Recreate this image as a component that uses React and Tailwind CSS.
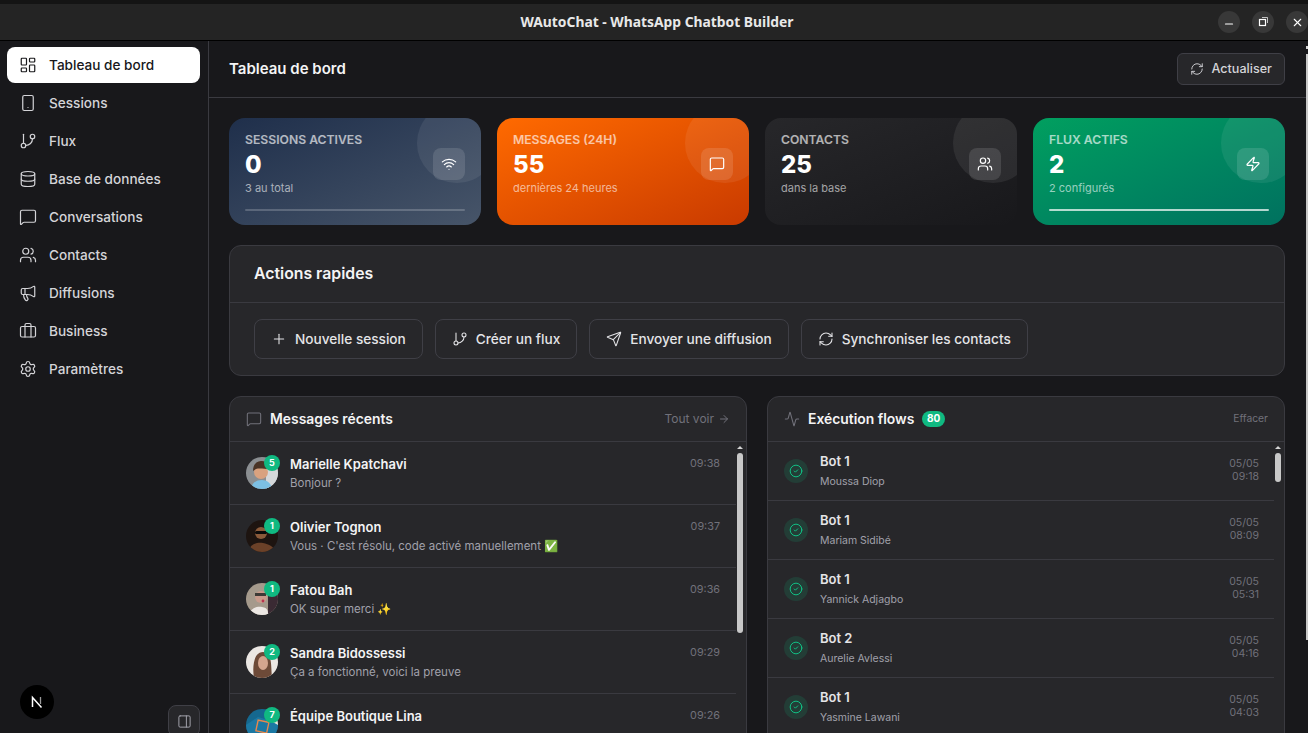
import React from 'react';
import {
  LayoutDashboard, Smartphone, GitBranch, Database, MessageSquare, Users, Megaphone,
  Briefcase, Settings, RefreshCw, Wifi, Zap, Plus, Send, ArrowRight, Activity, CircleCheck,
  PanelRight, Minus, X,
} from 'lucide-react';

const navItems = [
  { label: 'Tableau de bord', icon: LayoutDashboard, active: true },
  { label: 'Sessions', icon: Smartphone },
  { label: 'Flux', icon: GitBranch },
  { label: 'Base de données', icon: Database },
  { label: 'Conversations', icon: MessageSquare },
  { label: 'Contacts', icon: Users },
  { label: 'Diffusions', icon: Megaphone },
  { label: 'Business', icon: Briefcase },
  { label: 'Paramètres', icon: Settings },
];

const messages = [
  { name: 'Marielle Kpatchavi', text: 'Bonjour ?', time: '09:38', count: 5, avatar: 'a' },
  { name: 'Olivier Tognon', text: "Vous · C'est résolu, code activé manuellement ✅", time: '09:37', count: 1, avatar: 'b' },
  { name: 'Fatou Bah', text: 'OK super merci ✨', time: '09:36', count: 1, avatar: 'c' },
  { name: 'Sandra Bidossessi', text: 'Ça a fonctionné, voici la preuve', time: '09:29', count: 2, avatar: 'd' },
  { name: 'Équipe Boutique Lina', text: '', time: '09:26', count: 7, avatar: 'e' },
];

const flows = [
  { bot: 'Bot 1', name: 'Moussa Diop', date: '05/05', time: '09:18' },
  { bot: 'Bot 1', name: 'Mariam Sidibé', date: '05/05', time: '08:09' },
  { bot: 'Bot 1', name: 'Yannick Adjagbo', date: '05/05', time: '05:31' },
  { bot: 'Bot 2', name: 'Aurelie Avlessi', date: '05/05', time: '04:16' },
  { bot: 'Bot 1', name: 'Yasmine Lawani', date: '05/05', time: '04:03' },
];

function Avatar({ kind }) {
  return (
    <svg viewBox="0 0 32 32" className="w-8 h-8 rounded-full block">
      {kind === 'a' && (
        <>
          <rect width="32" height="32" fill="#8b8f92" />
          <rect x="20" width="12" height="32" fill="#d5d8da" />
          <path d="M5 32c1-7 6-9 11-9s9 3 10 9z" fill="#7cc0e4" />
          <circle cx="15" cy="15" r="7" fill="#d9a27f" />
          <path d="M7 14c0-8 5-10 9-10s7 3 7 8c-4 0-10-1-13 0z" fill="#4a3426" />
        </>
      )}
      {kind === 'b' && (
        <>
          <rect width="32" height="32" fill="#1d1410" />
          <path d="M2 32c2-8 9-10 15-9s11 4 13 9z" fill="#6b4128" />
          <circle cx="15" cy="13" r="6" fill="#8a5a3a" />
          <rect x="9" y="11" width="12" height="3" rx="1.5" fill="#0a0a0a" />
        </>
      )}
      {kind === 'c' && (
        <>
          <rect width="32" height="32" fill="#a59a8c" />
          <rect x="22" y="8" width="10" height="24" fill="#3a2a33" />
          <path d="M3 32c1-6 7-9 13-8s6 4 6 8z" fill="#ece7e3" />
          <circle cx="15" cy="14" r="6" fill="#c99b8c" />
          <rect x="9" y="10" width="11" height="3" fill="#3d3a36" />
          <circle cx="17" cy="18" r="1.4" fill="#b8334e" />
        </>
      )}
      {kind === 'd' && (
        <>
          <rect width="32" height="32" fill="#ebe7e3" />
          <path d="M8 32c-2-12 0-26 9-26s8 12 9 26z" fill="#6d4a38" />
          <ellipse cx="17" cy="17" rx="5" ry="7" fill="#d4a58e" />
        </>
      )}
      {kind === 'e' && (
        <>
          <rect width="32" height="32" fill="#15688f" />
          <path d="M0 16 12 8l20 6v18H0z" fill="#1b78a3" />
          <rect x="11" y="12" width="11" height="11" fill="none" stroke="#e8874a" strokeWidth="1.4" transform="rotate(12 16 17)" />
          <path d="M25 12l7 4v-8z" fill="#ece7d8" />
        </>
      )}
    </svg>
  );
}

function StatCard({ title, value, sub, icon: Icon, bg, bar }) {
  return (
    <div className={`relative h-[107px] rounded-2xl overflow-hidden px-4 pt-[14px] ${bg}`}>
      <div className="absolute -top-[15px] -right-4 w-20 h-20 rounded-full bg-white/[0.07]" />
      <div className="relative text-[12.2px] font-semibold uppercase leading-4 text-white/65">{title}</div>
      <div className="relative text-2xl font-extrabold text-white leading-8 mt-px">{value}</div>
      <div className="relative text-[11px] leading-4 text-white/60 -mt-px">{sub}</div>
      {bar && <div className={`absolute left-4 right-4 bottom-[14px] h-0.5 rounded-full ${bar}`} />}
      <div className="absolute right-4 top-[30px] w-8 h-8 rounded-lg bg-white/[0.12] flex items-center justify-center">
        <Icon size={16} className="text-white" strokeWidth={1.8} />
      </div>
    </div>
  );
}

function ActionButton({ icon: Icon, children }) {
  return (
    <button className="h-10 px-4 flex items-center gap-2 rounded-lg border border-[#3f3f46] text-[13.65px] font-medium text-[#e4e4e7]">
      <Icon size={16} strokeWidth={1.6} />
      {children}
    </button>
  );
}

function ScrollBar({ thumbClass }) {
  return (
    <div className="absolute top-1 right-[2px] w-2 flex flex-col items-center">
      <div className="w-0 h-0 border-x-[3px] border-x-transparent border-b-[3px] border-b-[#d4d4d4]" />
      <div className={`w-[6px] mt-1 rounded-full bg-[#c8c8c8] ${thumbClass}`} />
    </div>
  );
}

export default function App() {
  return (
    <div className="relative h-screen flex flex-col overflow-hidden bg-[#18181b] text-white font-['Inter',sans-serif]">
      {/* barre de titre */}
      <div className="h-[41px] shrink-0 border-t-4 border-t-[#141414] border-b border-b-black bg-[#242424] relative flex items-center justify-center pl-[6px]">
        <span className="text-[13.85px] font-bold font-['Noto_Sans',sans-serif] text-[#e8e8e8]">WAutoChat - WhatsApp Chatbot Builder</span>
        <div className="absolute right-0 top-[7px] flex gap-[12px]">
          <div className="w-[22px] h-[22px] rounded-full bg-[#383838] flex items-center justify-center"><Minus size={12} strokeWidth={2.4} className="mt-1" /></div>
          <div className="w-[22px] h-[22px] rounded-full bg-[#383838] flex items-center justify-center">
            <svg viewBox="0 0 12 12" className="w-3 h-3" fill="none" stroke="currentColor">
              <rect x="2.5" y="3.5" width="6" height="6" strokeWidth="1.2" />
              <path d="M5 1.5h5.5V7" strokeWidth="0.7" />
            </svg>
          </div>
          <div className="w-[22px] h-[22px] rounded-full bg-[#383838] flex items-center justify-center"><X size={13} /></div>
        </div>
      </div>

      <div className="flex-1 min-h-0 flex">
        {/* sidebar */}
        <aside className="w-[209px] shrink-0 border-r border-[#3a3a40] pl-[7px] pr-2 pt-[6px] relative">
          <nav className="flex flex-col gap-[2px]">
            {navItems.map((item) => (
              <div
                key={item.label}
                className={`h-9 flex items-center gap-3 pl-3 rounded-lg text-[13.6px] font-medium ${item.active ? 'bg-white text-[#18181b]' : 'text-[#d4d4d8]'}`}
              >
                <item.icon size={18} strokeWidth={1.6} />
                {item.label}
              </div>
            ))}
          </nav>
          <div className="absolute left-[20px] bottom-[14px] w-[34px] h-[34px] rounded-full bg-black flex items-center justify-center">
            <svg viewBox="0 0 16 16" className="w-4 h-4" fill="none">
              <path d="M3.5 13V3.5L12.5 13.5" stroke="#fff" strokeWidth="1.5" />
              <path d="M11.5 3v7" stroke="#9a9a9a" strokeWidth="1.3" />
            </svg>
          </div>
          <div className="absolute right-2 -bottom-[4px] w-8 h-8 rounded-lg bg-[#27272a] border border-[#3f3f46] flex items-center justify-center text-[#a1a1aa]">
            <PanelRight size={15} strokeWidth={1.6} />
          </div>
        </aside>

        {/* contenu */}
        <main className="flex-1 min-w-0 flex flex-col pr-[2px]">
          <header className="h-[57px] shrink-0 border-b border-[#3a3a40] flex items-center justify-between pl-5 pr-[21px]">
            <h1 className="text-[15px] font-semibold text-[#f4f4f5]">Tableau de bord</h1>
            <button className="h-8 pl-3 pr-3 flex items-center gap-[7px] rounded-md border border-[#3f3f46] bg-[#27272a] text-[12.6px] font-medium text-[#d4d4d8]">
              <RefreshCw size={14} strokeWidth={1.6} />
              Actualiser
            </button>
          </header>

          <div className="flex-1 min-h-0 overflow-hidden pl-5 pr-[21px] pt-5">
            <div className="grid grid-cols-4 gap-4">
              <StatCard title="Sessions actives" value="0" sub="3 au total" icon={Wifi} bg="bg-gradient-to-br from-[#1f2f4b] to-[#475569]" bar="bg-white/20" />
              <StatCard title="Messages (24h)" value="55" sub="dernières 24 heures" icon={MessageSquare} bg="bg-gradient-to-br from-[#ff6a00] to-[#c93a00]" />
              <StatCard title="Contacts" value="25" sub="dans la base" icon={Users} bg="bg-gradient-to-br from-[#27272a] to-[#18181b]" />
              <StatCard title="Flux actifs" value="2" sub="2 configurés" icon={Zap} bg="bg-gradient-to-br from-[#019f5f] to-[#00715f]" bar="bg-white/70" />
            </div>

            <section className="mt-5 rounded-xl border border-[#3a3a40] bg-[#27272a]">
              <h2 className="h-[57px] flex items-center px-6 pb-px border-b border-[#3a3a40] text-[15.8px] font-semibold text-[#f4f4f5]">Actions rapides</h2>
              <div className="flex gap-3 px-6 pt-4 pb-4">
                <ActionButton icon={Plus}>Nouvelle session</ActionButton>
                <ActionButton icon={GitBranch}>Créer un flux</ActionButton>
                <ActionButton icon={Send}>Envoyer une diffusion</ActionButton>
                <ActionButton icon={RefreshCw}>Synchroniser les contacts</ActionButton>
              </div>
            </section>

            <div className="mt-5 grid grid-cols-2 gap-5">
              <section className="rounded-xl border border-[#3a3a40] bg-[#27272a] h-[420px]">
                <div className="h-[45px] flex items-center justify-between pl-4 pr-4 border-b border-[#3a3a40]">
                  <div className="flex items-center gap-2">
                    <MessageSquare size={16} strokeWidth={1.6} className="text-[#71717a]" />
                    <span className="text-[13.9px] font-semibold text-[#f4f4f5]">Messages récents</span>
                  </div>
                  <div className="flex items-center gap-1 text-xs text-[#71717a]">
                    Tout voir <ArrowRight size={12} />
                  </div>
                </div>
                <div className="relative">
                  <ScrollBar thumbClass="h-[180px]" />
                  {messages.map((m) => (
                    <div key={m.name} className="h-[63px] mr-2.5 border-b border-[#3a3a40] flex items-center pl-4 pr-4 gap-3">
                      <div className="relative shrink-0">
                        <Avatar kind={m.avatar} />
                        <span className="absolute -top-[2px] -right-[2px] w-4 h-4 rounded-full bg-[#10b981] text-[9px] font-bold text-white flex items-center justify-center">{m.count}</span>
                      </div>
                      <div className="flex-1 min-w-0 self-start pt-[11.5px]">
                        <div className="text-[13px] font-semibold text-[#f4f4f5] leading-5">{m.name}</div>
                        {m.text && <div className="text-[11.5px] text-[#a1a1aa] leading-5 truncate -mt-px">{m.text}</div>}
                      </div>
                      <span className="self-start mt-[14px] text-[10.8px] text-[#71717a]">{m.time}</span>
                    </div>
                  ))}
                </div>
              </section>

              <section className="rounded-xl border border-[#3a3a40] bg-[#27272a] h-[420px]">
                <div className="h-[45px] flex items-center justify-between pl-4 pr-4 border-b border-[#3a3a40]">
                  <div className="flex items-center gap-2">
                    <Activity size={16} strokeWidth={1.6} className="text-[#71717a]" />
                    <span className="text-[13.9px] font-semibold text-[#f4f4f5]">Exécution flows</span>
                    <span className="px-[4.5px] h-4 rounded-full bg-[#10b981] text-[10px] font-bold text-white flex items-center">80</span>
                  </div>
                  <span className="text-[10.3px] text-[#71717a]">Effacer</span>
                </div>
                <div className="relative">
                  <ScrollBar thumbClass="h-[29px]" />
                  {flows.map((f, i) => (
                    <div key={i} className="h-[59px] mr-2.5 border-b border-[#3a3a40] flex items-center pl-4 pr-[15px] gap-3">
                      <div className="w-6 h-6 rounded-full bg-[#10b981]/15 flex items-center justify-center shrink-0">
                        <CircleCheck size={14} strokeWidth={1.6} className="text-[#10c98a]" />
                      </div>
                      <div className="flex-1 min-w-0">
                        <div className="text-[13px] font-semibold text-[#e4e4e7] leading-5 -mt-px">{f.bot}</div>
                        <div className="text-[10.5px] text-[#a1a1aa] leading-4 mt-[3px]">{f.name}</div>
                      </div>
                      <div className="text-right text-[10.5px] leading-[13px] text-[#71717a] pb-[2px]">
                        <div>{f.date}</div>
                        <div>{f.time}</div>
                      </div>
                    </div>
                  ))}
                </div>
              </section>
            </div>
          </div>
        </main>
      </div>

      {/* ascenseur de la page, presque coupé par le bord */}
      <div className="absolute top-[46px] right-0 w-[2px] h-[3px] bg-[#d4d4d4]" />
      <div className="absolute top-[54px] right-0 w-[2px] h-[586px] bg-[#c8c8c8]" />
    </div>
  );
}
